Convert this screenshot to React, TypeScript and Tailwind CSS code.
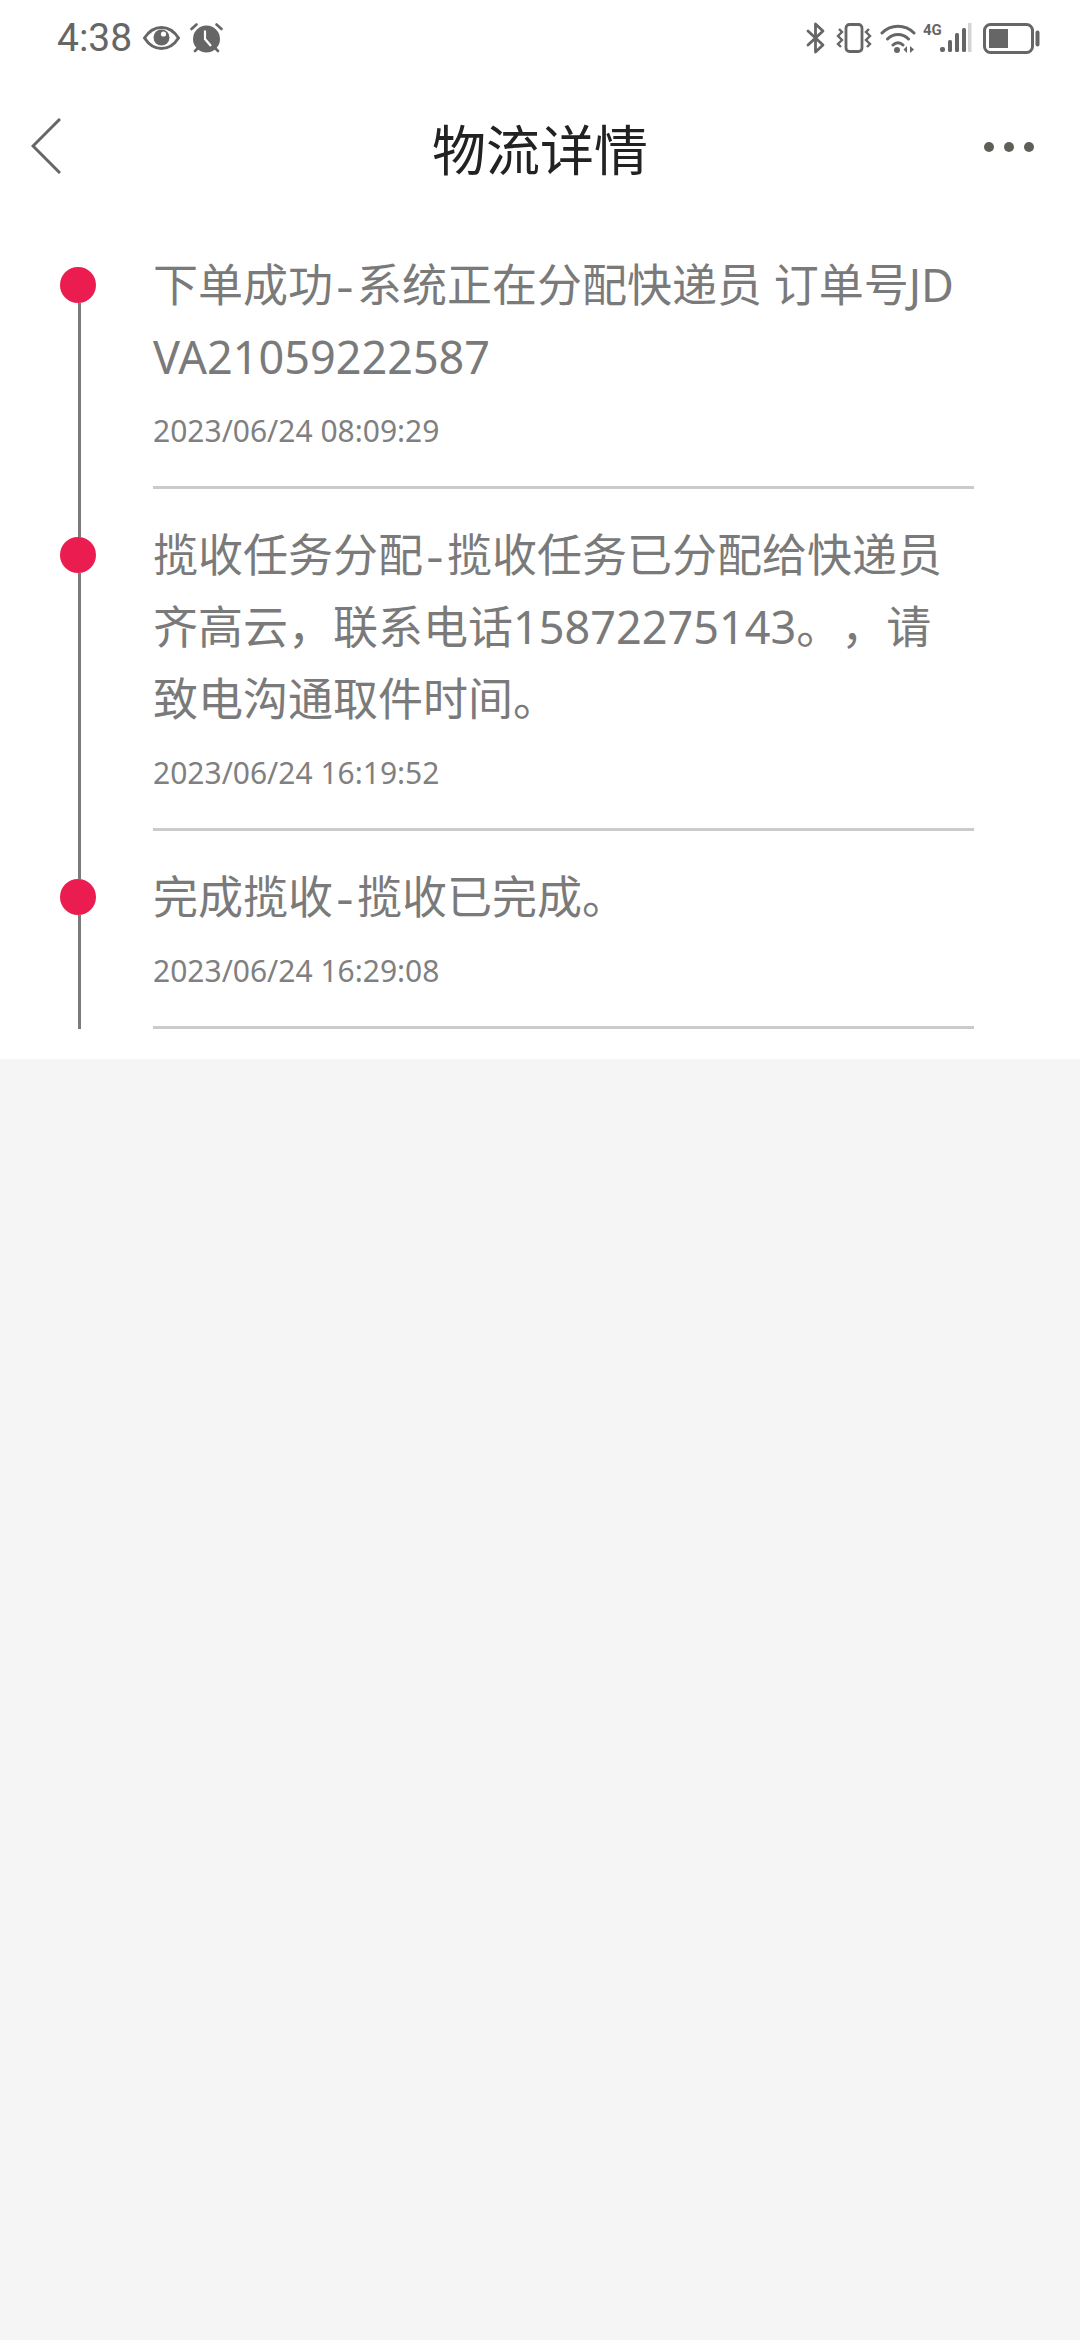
const cjk = "font-['Noto_Sans','Noto_Sans_CJK_SC',sans-serif]";

const items = [
  { title: "下单成功", text: "系统正在分配快递员 订单号JDVA21059222587", time: "2023/06/24 08:09:29" },
  { title: "揽收任务分配", text: "揽收任务已分配给快递员齐高云，联系电话15872275143。，请致电沟通取件时间。", time: "2023/06/24 16:19:52" },
  { title: "完成揽收", text: "揽收已完成。", time: "2023/06/24 16:29:08" },
];

function Eye() {
  return (
    <svg width="37" height="24" viewBox="0 0 37 24" className="ml-[11px]">
      <path d="M1.5 12C6 5 12 1.5 18.5 1.5S31 5 35.5 12C31 19 25 22.5 18.5 22.5S6 19 1.5 12Z" fill="none" stroke="#666" strokeWidth="3" />
      <circle cx="18.5" cy="11.5" r="8" fill="#666" />
      <circle cx="20.5" cy="8" r="2.6" fill="#fff" />
    </svg>
  );
}

function Alarm() {
  return (
    <svg width="33" height="30" viewBox="0 0 33 30" className="ml-[10px]">
      <circle cx="16.5" cy="16" r="13.5" fill="#666" />
      <path d="M1.5 6 6.5 1.5M31.5 6 26.5 1.5M5 28l3-3M28 28l-3-3" stroke="#666" strokeWidth="2.6" strokeLinecap="round" />
      <path d="M15 7.5V16l6 7" fill="none" stroke="#fff" strokeWidth="2.2" />
    </svg>
  );
}

function StatusRight() {
  return (
    <div className="flex items-center">
      <svg width="20" height="32" viewBox="0 0 20 32">
        <path d="M2 9 17 23 9.5 30V2L17 9 2 23" fill="none" stroke="#666" strokeWidth="2.8" strokeLinejoin="round" strokeLinecap="round" />
      </svg>
      <svg width="36" height="30" viewBox="0 0 36 30" className="ml-[10px]">
        <rect x="10" y="1.5" width="16" height="27" rx="3.5" fill="none" stroke="#666" strokeWidth="2.8" />
        <path d="M3 6 6 9 2 13 6 17 2 21 5 24M33 6 30 9 34 13 30 17 34 21 31 24" fill="none" stroke="#666" strokeWidth="2.4" />
      </svg>
      <svg width="36" height="31" viewBox="0 0 36 31" className="ml-[8px]">
        <path d="M2 10C11 1 25 1 34 10M7.5 16C13.5 10 22.5 10 28.5 16M13 22C16 19 20 19 23 22" fill="none" stroke="#666" strokeWidth="3" strokeLinecap="round" />
        <circle cx="17" cy="27" r="3" fill="#666" />
        <path d="M27 23v7l-3.5-3.5ZM30 23v7l4-3.5Z" fill="#666" />
      </svg>
      <div className="relative ml-[7px] h-[32px] w-[49px]">
        <span className="absolute left-0 top-[1px] font-['Roboto',sans-serif] text-[15px] font-bold leading-[15px] text-[#666]">4G</span>
        <svg width="49" height="32" viewBox="0 0 49 32" className="absolute inset-0">
          <rect x="17" y="25" width="5" height="5" rx="2" fill="#666" />
          <rect x="25" y="18" width="4" height="12" rx="1.5" fill="#666" />
          <rect x="32" y="11" width="4" height="19" rx="1.5" fill="#666" />
          <rect x="39" y="6" width="4" height="24" rx="1.5" fill="#666" />
          <rect x="45" y="1" width="3.5" height="29" fill="#d4d4d4" />
        </svg>
      </div>
      <svg width="57" height="31" viewBox="0 0 57 31" className="ml-[11px]">
        <rect x="1.5" y="1.5" width="48" height="28" rx="6" fill="none" stroke="#666" strokeWidth="3" />
        <rect x="6" y="6" width="19" height="19" fill="#666" />
        <rect x="52.5" y="7.5" width="4" height="16" rx="2" fill="#666" />
      </svg>
    </div>
  );
}

export default function App() {
  return (
    <div className={`min-h-[2340px] w-[1080px] bg-[#f5f5f5] ${cjk}`}>
      <div className="bg-white pb-[30px]">
        <div className="flex h-[76px] items-center pl-[57px] pr-[40px]">
          <span className="font-['Roboto',sans-serif] text-[39px] leading-none text-[#666]">4:38</span>
          <Eye />
          <Alarm />
          <div className="flex-1" />
          <StatusRight />
        </div>
        <div className="flex h-[144px] items-center pl-[31px] pr-[46px]">
          <svg width="30" height="56" viewBox="0 0 30 56" className="mr-[35px] mt-[-4px]">
            <path d="M29 1 2 28 29 55" fill="none" stroke="#666" strokeWidth="3" />
          </svg>
          <div className="mt-[3px] flex-1 text-center text-[54px] leading-none text-[#222]">物流详情</div>
          <svg width="50" height="10" viewBox="0 0 50 10" className="mt-[-2px]">
            <circle cx="5" cy="5" r="5" fill="#5f5f5a" />
            <circle cx="25" cy="5" r="5" fill="#5f5f5a" />
            <circle cx="45" cy="5" r="5" fill="#5f5f5a" />
          </svg>
        </div>
        <div className="pl-[60px] pr-[106px] pt-[47px]">
          {items.map((item, i) => (
            <div key={item.time} className="flex">
              <div className="flex w-[36px] shrink-0 flex-col items-center">
                <div className="h-[36px] w-[36px] rounded-full bg-[#eb1c50]" />
                <div className="w-[3px] flex-1 translate-x-[1px] bg-[#7b7b7b]" />
              </div>
              <div className="ml-[57px] mt-[-18px] min-w-0 flex-1">
                <div className="break-all text-[45px] leading-[72px] text-[#7a7a7a] [text-spacing-trim:space-all]">
                  {item.title}
                  <span className="inline-block w-[24px] scale-x-[1.2] text-center">-</span>
                  {item.text}
                </div>
                <div className="mt-[20px] text-[30px] leading-[36px] text-[#808080]">{item.time}</div>
                <div className={`mt-[37px] h-[3px] bg-[#cbcbcb] ${i < items.length - 1 ? "mb-[48px]" : ""}`} />
              </div>
            </div>
          ))}
        </div>
      </div>
    </div>
  );
}
